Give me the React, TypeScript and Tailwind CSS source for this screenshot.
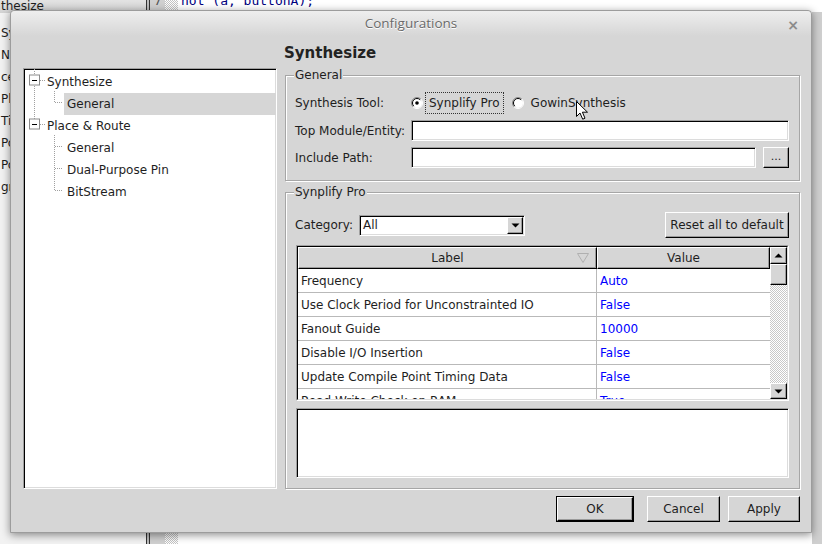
import React from 'react';

const ui = "font-['DejaVu_Sans',sans-serif] text-[12px] text-[#1e1e1e]";
const sunken =
  'border border-t-[#a0a0a0] border-l-[#a0a0a0] border-r-white border-b-white shadow-[inset_1px_1px_0_#000,inset_-1px_-1px_0_#dcdcdc]';
const raised =
  'border border-t-white border-l-white border-r-black border-b-black shadow-[inset_-1px_-1px_0_#9a9a9a] bg-[#d6d6d6]';

const Radio = ({ checked }: { checked?: boolean }) => (
  <svg width="12" height="12" viewBox="0 0 12 12" className="shrink-0">
    <circle cx="6" cy="6" r="5" fill="#fff" />
    <path d="M2.1 9.9 A5.5 5.5 0 0 1 9.9 2.1" fill="none" stroke="#8a8a8a" />
    <path d="M2.8 9.2 A4.5 4.5 0 0 1 9.2 2.8" fill="none" stroke="#000" />
    <path d="M9.9 2.1 A5.5 5.5 0 0 1 2.1 9.9" fill="none" stroke="#fff" />
    {checked && <circle cx="6" cy="6" r="1.8" fill="#000" />}
  </svg>
);

const Arrow = ({ up }: { up?: boolean }) => (
  <svg width="9" height="5" viewBox="0 0 9 5">
    <path d={up ? 'M0.5 4.5 L4.5 0.5 L8.5 4.5 Z' : 'M0.5 0.5 L4.5 4.5 L8.5 0.5 Z'} fill="#000" />
  </svg>
);

const GroupBox = ({ title, className, children }: { title: string; className: string; children: React.ReactNode }) => (
  <div className={`relative border border-[#a6a6a6] shadow-[inset_1px_1px_0_#fff,1px_1px_0_#fff] ${className}`}>
    <span className="absolute left-[8px] -top-[8px] px-[1px] bg-[#d6d6d6] leading-[14px]">{title}</span>
    {children}
  </div>
);

const rows = [
  ['Frequency', 'Auto'],
  ['Use Clock Period for Unconstrainted IO', 'False'],
  ['Fanout Guide', '10000'],
  ['Disable I/O Insertion', 'False'],
  ['Update Compile Point Timing Data', 'False'],
  ['Read Write Check on RAM', 'True'],
];

const TreeLines = () => (
  <svg className="absolute inset-0 pointer-events-none" width="250" height="140">
    <g stroke="#a0a0a0" strokeDasharray="1 1" fill="none">
      <path d="M10.5 0 V6 M10.5 17 V50 M16 11.5 H21 M16 55.5 H21" />
      <path d="M30.5 22 V33 M31 33.5 H38" />
      <path d="M30.5 66 V121 M31 77.5 H38 M31 99.5 H38 M31 121.5 H38" />
    </g>
    {[11, 55].map((y) => (
      <g key={y}>
        <rect x="5.5" y={y - 5} width="10" height="10" fill="#fff" stroke="#8c8c8c" />
        <path d={`M8 ${y + 0.5} H13`} stroke="#000" />
      </g>
    ))}
  </svg>
);

const App: React.FC = () => {
  return (
    <div className={`relative w-[822px] h-[544px] overflow-hidden bg-white ${ui}`}>
      {/* background application */}
      <div className="absolute left-0 top-0 w-[146px] h-full bg-[#f2f2f2] flex flex-col">
        <div className="h-[14px] -mt-[1px] bg-gradient-to-b from-[#e4e4e4] to-[#d2d2d2] pl-[1px] leading-[14px]">thesize</div>
        <div className="flex flex-col pt-[9px]">
          {['Synthesize', 'Netlist', 'ceFiles', 'Place', 'Timing', 'Power', 'Port', 'gram'].map((t) => (
            <div key={t} className="h-[22px] leading-[22px] pl-[1px]">{t}</div>
          ))}
        </div>
      </div>
      <div className="absolute left-[146px] top-0 h-full flex">
        <div className="w-[4px] h-full border-x border-[#333] bg-[#bdbdbd]" />
        <div className="w-[15px] h-full bg-[#d0d0d0]" />
        <div className="w-[13px] h-full bg-[repeating-conic-gradient(#c4c4c4_0%_25%,#ffffff_0%_50%)] bg-[length:2px_2px]" />
        <div className="-mt-[9px] h-[20px] leading-[20px] font-['DejaVu_Sans_Mono',monospace] text-[13px] text-[#000080] pl-[3px]">
          not (a, buttonA);
        </div>
      </div>
      <div className="absolute left-[154px] -top-[9px] h-[20px] leading-[20px] font-['DejaVu_Sans_Mono',monospace] text-[13px] text-[#555]">7</div>
      <div className="absolute right-0 top-[12px] bottom-0 w-[10px] bg-[#cfcfcf]" />

      {/* dialog window */}
      <div className="absolute left-[10px] top-[10px] w-[802px] h-[523px] flex flex-col bg-[#d6d6d6] border border-[#9c9c9c] rounded-t-[4px] shadow-[0_2px_9px_rgba(0,0,0,0.45)]">
        <div className="relative h-[25px] shrink-0 flex items-center justify-center rounded-t-[4px] bg-gradient-to-b from-[#eeeeee] to-[#d6d6d6]">
          <span className="font-['Open_Sans',sans-serif] text-[13.5px] text-[#6a6a6a] [text-shadow:0_1px_0_#fff]">Configurations</span>
          <span className="absolute right-[12px] top-[4px] text-[14px] font-bold text-[#8c8c8c] font-['DejaVu_Sans',sans-serif]">×</span>
        </div>

        <div className="flex flex-col pl-[12px] pr-[11px]">
          <div className="flex gap-[8px] pt-[7px]">
            {/* tree */}
            <div className={`w-[254px] h-[421px] mt-[25px] bg-white ${sunken}`}>
              <div className="relative pt-[2px] pl-[1px]">
                <TreeLines />
                <div className="h-[22px] flex items-center pl-[22px]">Synthesize</div>
                <div className="h-[22px] flex items-center ml-[39px] pl-[3px] bg-[#d6d6d6]">General</div>
                <div className="h-[22px] flex items-center pl-[22px]">Place &amp; Route</div>
                <div className="h-[22px] flex items-center pl-[42px]">General</div>
                <div className="h-[22px] flex items-center pl-[42px]">Dual-Purpose Pin</div>
                <div className="h-[22px] flex items-center pl-[42px]">BitStream</div>
              </div>
            </div>

            {/* right column */}
            <div className="w-[515px] flex flex-col">
              <div className="h-[20px] leading-[20px] -ml-[1px] font-bold text-[15px] text-[#222]">Synthesize</div>

              <GroupBox title="General" className="mt-[12px] h-[106px] pt-[16px] pl-[9px] pr-[10px]">
                <div className="h-[22px] flex items-center">
                  <span className="w-[116px]">Synthesis Tool:</span>
                  <Radio checked />
                  <span className="ml-[2px] px-[3px] py-[1px] border border-dotted border-[#333]">Synplify Pro</span>
                  <span className="ml-[8px]"><Radio /></span>
                  <span className="ml-[7px]">GowinSynthesis</span>
                </div>
                <div className="h-[21px] mt-[6px] flex items-center">
                  <span className="w-[116px]">Top Module/Entity:</span>
                  <div className={`flex-1 h-full bg-white ${sunken}`} />
                </div>
                <div className="h-[21px] mt-[6px] flex items-center">
                  <span className="w-[116px]">Include Path:</span>
                  <div className={`flex-1 h-full bg-white ${sunken}`} />
                  <div className={`ml-[7px] w-[26px] h-full flex items-center justify-center text-[11px] ${raised}`}>...</div>
                </div>
              </GroupBox>

              <GroupBox title="Synplify Pro" className="mt-[11px] h-[297px] pt-[19px] pl-[10px] pr-[10px] flex flex-col">
                <div className="h-[26px] flex items-center">
                  <span className="w-[64px] -ml-[1px]">Category:</span>
                  <div className={`w-[166px] h-[21px] flex items-center bg-white ${sunken}`}>
                    <span className="flex-1 pl-[3px]">All</span>
                    <div className={`w-[16px] h-[17px] mr-[1px] flex items-center justify-center ${raised}`}>
                      <Arrow />
                    </div>
                  </div>
                  <div className={`ml-auto w-[124px] h-[26px] flex items-center justify-center ${raised}`}>Reset all to default</div>
                </div>

                {/* table */}
                <div className="mt-[7px] h-[156px] border border-t-[#a0a0a0] border-l-[#a0a0a0] border-r-white border-b-white">
                  <div className="h-full border border-t-black border-l-black border-r-[#dcdcdc] border-b-[#dcdcdc] flex bg-white">
                    <div className="flex-1 flex flex-col overflow-hidden">
                      <div className="h-[22px] shrink-0 flex">
                        <div className={`relative w-[299px] h-full flex items-center justify-center ${raised}`}>
                          Label
                          <svg className="absolute right-[7px] top-[5px]" width="12" height="10" viewBox="0 0 12 10">
                            <path d="M0.5 0.5 H11.5 L6 9.5 Z" fill="none" stroke="#b0b0b0" />
                          </svg>
                        </div>
                        <div className={`flex-1 h-full flex items-center justify-center ${raised}`}>Value</div>
                      </div>
                      {rows.map(([label, value]) => (
                        <div key={label} className="h-[24px] shrink-0 flex border-b border-[#b9b9b9]">
                          <div className="w-[299px] pl-[3px] flex items-center border-r border-[#b9b9b9]">{label}</div>
                          <div className="flex-1 pl-[3px] flex items-center text-[#0000ff]">{value}</div>
                        </div>
                      ))}
                    </div>
                    <div className="w-[17px] flex flex-col">
                      <div className={`h-[17px] flex items-center justify-center ${raised}`}><Arrow up /></div>
                      <div className={`h-[21px] ${raised}`} />
                      <div className="flex-1 bg-[repeating-conic-gradient(#c8c8c8_0%_25%,#ffffff_0%_50%)] bg-[length:2px_2px]" />
                      <div className={`h-[16px] flex items-center justify-center ${raised}`}><Arrow /></div>
                    </div>
                  </div>
                </div>

                <div className={`mt-[7px] h-[70px] bg-white ${sunken}`} />
              </GroupBox>
            </div>
          </div>

          {/* buttons */}
          <div className="mt-[7px] h-[26px] flex justify-end">
            <div className="w-[78px] h-full border border-black">
              <div className={`h-full flex items-center justify-center ${raised}`}>OK</div>
            </div>
            <div className={`ml-[13px] w-[73px] h-full flex items-center justify-center ${raised}`}>Cancel</div>
            <div className={`ml-[8px] w-[72px] h-full flex items-center justify-center ${raised}`}>Apply</div>
          </div>
        </div>
      </div>

      {/* mouse pointer */}
      <svg className="absolute left-[576px] top-[101px] pointer-events-none" width="13" height="20" viewBox="0 0 13 20">
        <path d="M0.5 0.5 V15.5 L4 12 L6.7 18.2 L9 17.2 L6.4 11.2 H11.5 Z" fill="#fff" stroke="#000" strokeLinejoin="round" />
      </svg>
    </div>
  );
};

export default App;
